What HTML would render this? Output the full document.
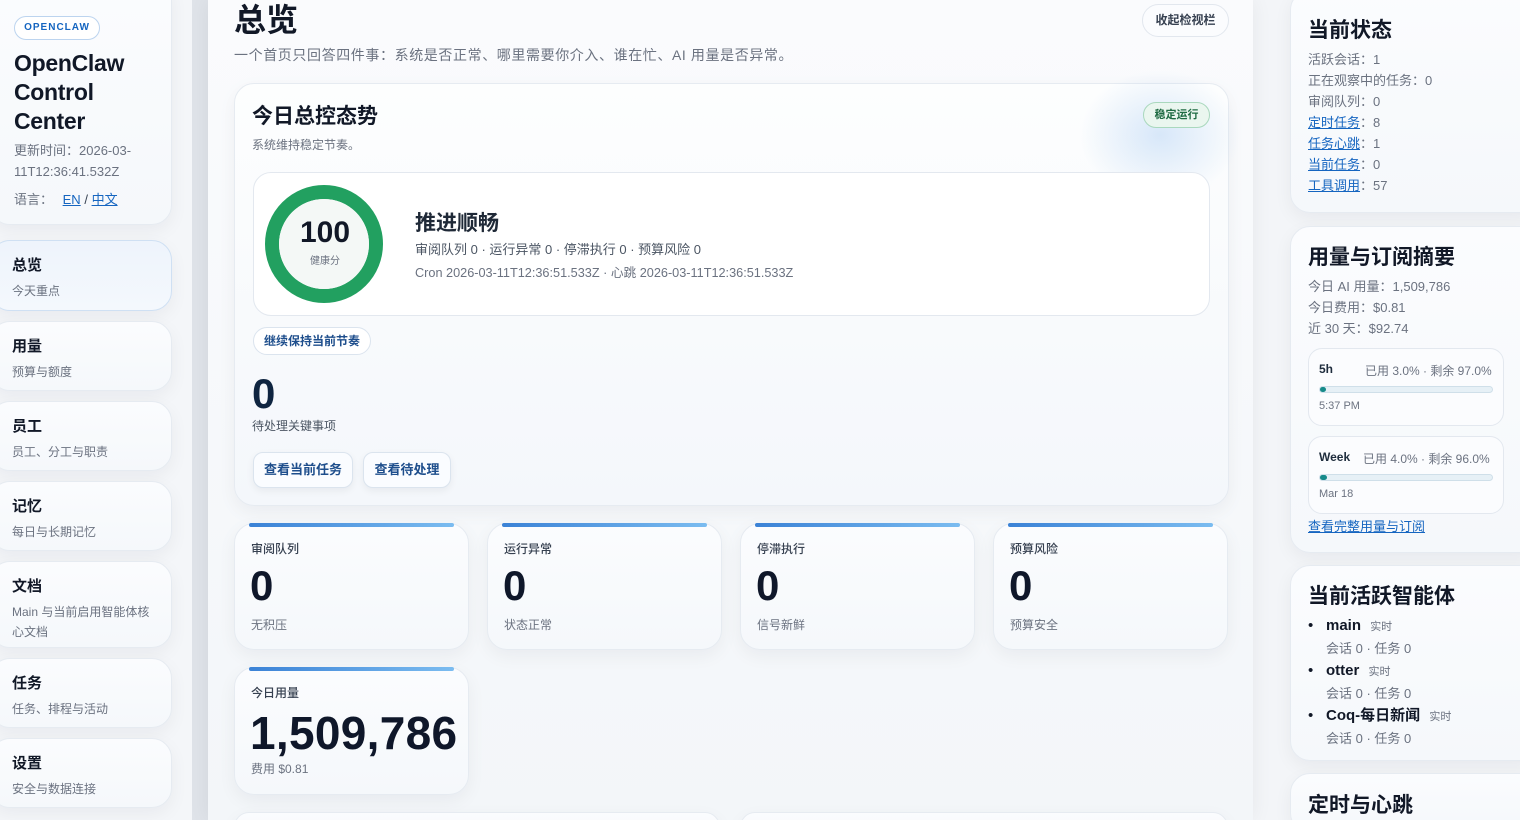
<!DOCTYPE html>
<html><head><meta charset="utf-8"><style>
*{box-sizing:border-box;margin:0;padding:0}
html{width:1520px;height:820px;overflow:hidden}
body{width:1520px;height:820px;overflow:hidden;background:#f3f5f8;font-family:"Liberation Sans","Noto Sans CJK SC",sans-serif;color:#111827;position:relative}
.a{position:absolute}
.card{position:absolute;background:linear-gradient(180deg,#fbfcfe,#f5f8fb);border:1px solid #e6ebf1;border-radius:20px;box-shadow:0 6px 18px rgba(15,23,42,.05)}
.nav h4{font-size:15px;font-weight:700;position:absolute;left:11px;top:13px}
.nav p{font-size:12px;color:#6b7280;position:absolute;left:11px;top:40px;line-height:20px;width:145px}
a{color:#1565c0;text-decoration:underline}
.m h5{position:absolute;left:16px;top:16px;font-size:12px;font-weight:500;color:#374151}
.m .n{position:absolute;left:15px;top:38px;font-size:42px;font-weight:700;color:#0f172a}
.m p{position:absolute;left:16px;top:92px;font-size:12px;color:#6b7280}
.m::before{content:"";position:absolute;left:14px;right:14px;top:-1px;height:4px;border-radius:4px;background:linear-gradient(90deg,#3b82d6,#7bbcf0)}
.rs p{font-size:13px;color:#6b7280;line-height:21px}
.btn{position:absolute;border:1px solid #dbe4ee;border-radius:10px;background:#fafcff;color:#1e4e8c;font-weight:700;font-size:13px;text-align:center;line-height:34px;box-shadow:0 3px 8px rgba(15,23,42,.06)}
</style></head><body>
<div class="a" style="left:0;top:0;width:192px;height:820px;background:#f4f6f9"></div>
<div class="a" style="left:192px;top:0;width:16px;height:820px;background:#dfe3e9"></div>
<div class="card" style="left:-10px;top:-20px;width:182px;height:245px;border-radius:20px"></div>
<div class="a" style="left:14px;top:16px;width:86px;height:24px;border:1px solid #bcd4ef;border-radius:12px;background:#fff;color:#1565c0;font-size:10px;font-weight:700;letter-spacing:1px;text-align:center;line-height:22px">OPENCLAW</div>
<div class="a" style="left:14px;top:49px;font-size:23px;font-weight:700;line-height:29px;letter-spacing:-.3px">OpenClaw<br>Control<br>Center</div>
<div class="a" style="left:14px;top:140px;font-size:13px;color:#6b7280;line-height:21px">更新时间：2026-03-<br>11T12:36:41.532Z</div>
<div class="a" style="left:14px;top:189px;font-size:13px;color:#6b7280">语言： <a style="margin-left:6px">EN</a> <span style="color:#374151">/</span> <a>中文</a></div>
<div class="card nav" style="left:-10px;top:240px;width:182px;height:71px;background:linear-gradient(180deg,#eef4fc,#f4f8fd);border-color:#cfe0f3"><h4 style="left:21px">总览</h4><p style="left:21px">今天重点</p></div>
<div class="card nav" style="left:-10px;top:321px;width:182px;height:70px"><h4 style="left:21px">用量</h4><p style="left:21px">预算与额度</p></div>
<div class="card nav" style="left:-10px;top:401px;width:182px;height:70px"><h4 style="left:21px">员工</h4><p style="left:21px">员工、分工与职责</p></div>
<div class="card nav" style="left:-10px;top:481px;width:182px;height:70px"><h4 style="left:21px">记忆</h4><p style="left:21px">每日与长期记忆</p></div>
<div class="card nav" style="left:-10px;top:561px;width:182px;height:87px"><h4 style="left:21px">文档</h4><p style="left:21px;width:140px">Main 与当前启用智能体核心文档</p></div>
<div class="card nav" style="left:-10px;top:658px;width:182px;height:70px"><h4 style="left:21px">任务</h4><p style="left:21px">任务、排程与活动</p></div>
<div class="card nav" style="left:-10px;top:738px;width:182px;height:70px"><h4 style="left:21px">设置</h4><p style="left:21px">安全与数据连接</p></div>

<div class="a" style="left:208px;top:0;width:1045px;height:820px;background:linear-gradient(180deg,#fafbfd,#f3f6f9);box-shadow:0 0 20px rgba(15,23,42,.06)"></div>
<div class="a" style="left:234px;top:0;font-size:32px;font-weight:700;line-height:40px">总览</div>
<div class="a" style="left:234px;top:45px;font-size:14px;color:#6b7280;letter-spacing:.6px">一个首页只回答四件事：系统是否正常、哪里需要你介入、谁在忙、AI 用量是否异常。</div>
<div class="a" style="left:1142px;top:4px;width:87px;height:33px;border:1px solid #e2e7ee;border-radius:17px;background:#fbfcfe;font-size:12px;font-weight:700;color:#374151;text-align:center;line-height:31px">收起检视栏</div>

<div class="card" style="left:234px;top:83px;width:995px;height:423px;background:linear-gradient(180deg,#fdfefe,#f4f7fb)"></div>
<div class="a" style="left:1080px;top:70px;width:160px;height:130px;border-radius:50%;background:radial-gradient(closest-side,rgba(147,190,240,.35),rgba(147,190,240,0))"></div>
<div class="a" style="left:252px;top:100px;font-size:21px;font-weight:700">今日总控态势</div>
<div class="a" style="left:252px;top:136px;font-size:12px;color:#6b7280">系统维持稳定节奏。</div>
<div class="a" style="left:1143px;top:102px;width:67px;height:26px;border:1px solid #a9d8bd;border-radius:13px;background:#eaf6ef;color:#1f6b43;font-size:11px;font-weight:700;text-align:center;line-height:24px">稳定运行</div>
<div class="a" style="left:253px;top:172px;width:957px;height:144px;border:1px solid #e3e8ef;border-radius:18px;background:#fff"></div>
<svg class="a" style="left:265px;top:185px" width="118" height="118"><circle cx="59" cy="59" r="52" fill="none" stroke="#22a060" stroke-width="14"/><circle cx="59" cy="59" r="45" fill="#f4f8f6"/></svg>
<div class="a" style="left:265px;top:216px;width:120px;text-align:center;font-size:30px;font-weight:700;color:#111827">100</div>
<div class="a" style="left:265px;top:252px;width:120px;text-align:center;font-size:10px;color:#6b7280">健康分</div>
<div class="a" style="left:415px;top:207px;font-size:21px;font-weight:700;color:#1f2937">推进顺畅</div>
<div class="a" style="left:415px;top:239px;font-size:13px;color:#4b5563">审阅队列 0 · 运行异常 0 · 停滞执行 0 · 预算风险 0</div>
<div class="a" style="left:415px;top:262px;font-size:12.7px;color:#6b7280">Cron 2026-03-11T12:36:51.533Z · 心跳 2026-03-11T12:36:51.533Z</div>
<div class="a" style="left:253px;top:327px;width:118px;height:28px;border:1px solid #dbe4ee;border-radius:14px;background:#fff;color:#1e4e8c;font-size:12px;font-weight:700;text-align:center;line-height:26px">继续保持当前节奏</div>
<div class="a" style="left:252px;top:370px;font-size:42px;font-weight:700;color:#0f2540">0</div>
<div class="a" style="left:252px;top:417px;font-size:12px;color:#4b5563">待处理关键事项</div>
<div class="btn" style="left:253px;top:452px;width:100px;height:36px">查看当前任务</div>
<div class="btn" style="left:363px;top:452px;width:88px;height:36px">查看待处理</div>

<div class="card m" style="left:234px;top:523px;width:235px;height:127px"><h5>审阅队列</h5><div class="n">0</div><p>无积压</p></div>
<div class="card m" style="left:487px;top:523px;width:235px;height:127px"><h5>运行异常</h5><div class="n">0</div><p>状态正常</p></div>
<div class="card m" style="left:740px;top:523px;width:235px;height:127px"><h5>停滞执行</h5><div class="n">0</div><p>信号新鲜</p></div>
<div class="card m" style="left:993px;top:523px;width:235px;height:127px"><h5>预算风险</h5><div class="n">0</div><p>预算安全</p></div>
<div class="card m" style="left:234px;top:667px;width:235px;height:128px"><h5>今日用量</h5><div class="n" style="font-size:46px;top:38px;letter-spacing:.3px">1,509,786</div><p>费用 $0.81</p></div>
<div class="card" style="left:234px;top:812px;width:486px;height:30px"></div>
<div class="card" style="left:740px;top:812px;width:488px;height:30px"></div>

<div class="card rs" style="left:1290px;top:-10px;width:250px;height:223px"></div>
<div class="a" style="left:1308px;top:14px;font-size:21px;font-weight:700">当前状态</div>
<div class="a rs" style="left:1308px;top:49px"><p>活跃会话：1</p><p>正在观察中的任务：0</p><p>审阅队列：0</p><p><a>定时任务</a>：8</p><p><a>任务心跳</a>：1</p><p><a>当前任务</a>：0</p><p><a>工具调用</a>：57</p></div>

<div class="card" style="left:1290px;top:226px;width:250px;height:327px"></div>
<div class="a" style="left:1308px;top:241px;font-size:21px;font-weight:700">用量与订阅摘要</div>
<div class="a rs" style="left:1308px;top:276px"><p>今日 AI 用量：1,509,786</p><p>今日费用：$0.81</p><p>近 30 天：$92.74</p></div>
<div class="a" style="left:1308px;top:348px;width:196px;height:78px;border:1px solid #e3e8ef;border-radius:14px;background:#fbfcfe"></div>
<div class="a" style="left:1319px;top:362px;font-size:12px;font-weight:700;color:#1f2d3d">5h</div>
<div class="a" style="left:1365px;top:362px;font-size:12px;color:#6b7280">已用 3.0% · 剩余 97.0%</div>
<div class="a" style="left:1319px;top:386px;width:174px;height:7px;border:1px solid #cfdfe9;border-radius:4px;background:#e6f0f6"><div style="width:6px;height:5px;border-radius:3px;background:#168a8a"></div></div>
<div class="a" style="left:1319px;top:400px;font-size:11px;color:#6b7280">5:37 PM</div>
<div class="a" style="left:1308px;top:436px;width:196px;height:78px;border:1px solid #e3e8ef;border-radius:14px;background:#fbfcfe"></div>
<div class="a" style="left:1319px;top:450px;font-size:12px;font-weight:700;color:#1f2d3d">Week</div>
<div class="a" style="left:1363px;top:450px;font-size:12px;color:#6b7280">已用 4.0% · 剩余 96.0%</div>
<div class="a" style="left:1319px;top:474px;width:174px;height:7px;border:1px solid #cfdfe9;border-radius:4px;background:#e6f0f6"><div style="width:7px;height:5px;border-radius:3px;background:#168a8a"></div></div>
<div class="a" style="left:1319px;top:488px;font-size:11px;color:#6b7280">Mar 18</div>
<div class="a" style="left:1308px;top:516px;font-size:13px"><a>查看完整用量与订阅</a></div>

<div class="card" style="left:1290px;top:565px;width:250px;height:196px"></div>
<div class="a" style="left:1308px;top:580px;font-size:21px;font-weight:700">当前活跃智能体</div>
<div class="a" style="left:1308px;top:615px;font-size:15px;line-height:21px">
<div><span style="display:inline-block;width:18px">•</span><b>main</b> <span style="font-size:11px;color:#6b7280;margin-left:5px">实时</span></div><div style="font-size:13px;color:#6b7280;padding-left:18px;line-height:22px">会话 0 · 任务 0</div>
<div><span style="display:inline-block;width:18px">•</span><b>otter</b> <span style="font-size:11px;color:#6b7280;margin-left:5px">实时</span></div><div style="font-size:13px;color:#6b7280;padding-left:18px;line-height:22px">会话 0 · 任务 0</div>
<div><span style="display:inline-block;width:18px">•</span><b>Coq-每日新闻</b> <span style="font-size:11px;color:#6b7280;margin-left:5px">实时</span></div><div style="font-size:13px;color:#6b7280;padding-left:18px;line-height:22px">会话 0 · 任务 0</div>
</div>
<div class="card" style="left:1290px;top:773px;width:250px;height:60px"></div>
<div class="a" style="left:1308px;top:789px;font-size:21px;font-weight:700">定时与心跳</div>
</body></html>
